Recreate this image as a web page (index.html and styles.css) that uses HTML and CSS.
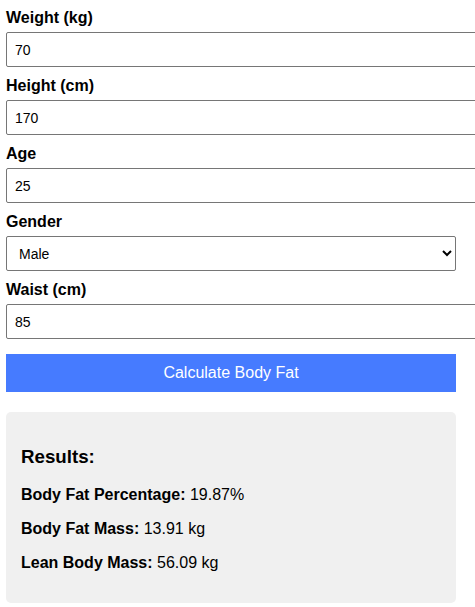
FILE: index.html
```html
<!DOCTYPE html>
<html lang="en">
<head>
    <meta charset="UTF-8">
    <meta name="viewport" content="width=device-width, initial-scale=1.0">
    <title>Body Fat Calculator</title>
    <link rel="stylesheet" href="styles.css">
</head>
<body>
    <div class="container">
        <label for="weight">Weight (kg)</label>
        <input type="number" id="weight" value="70">

        <label for="height">Height (cm)</label>
        <input type="number" id="height" value="170">

        <label for="age">Age</label>
        <input type="number" id="age" value="25">

        <label for="gender">Gender</label>
        <select id="gender">
            <option value="male">Male</option>
            <option value="female">Female</option>
        </select>

        <label for="waist">Waist (cm)</label>
        <input type="number" id="waist" value="85">

        <button id="calcBtn">Calculate Body Fat</button>

        <div class="results" id="results">
            <h3>Results:</h3>
            <p><strong>Body Fat Percentage:</strong> <span id="bfp">19.87%</span></p>
            <p><strong>Body Fat Mass:</strong> <span id="bfm">13.91 kg</span></p>
            <p><strong>Lean Body Mass:</strong> <span id="lbm">56.09 kg</span></p>
        </div>
    </div>
</body>
</html>
```

FILE: styles.css
```css
body {
    font-family: Arial, "Liberation Sans", sans-serif;
    margin: 0;
    padding: 0;
    color: #000;
    background: #fff;
    overflow: hidden;
}
.container {
    width: 450px;
    padding: 9px 6px;
}
label {
    display: block;
    font-weight: bold;
    font-size: 16px;
    margin-bottom: 5px;
}
input, select {
    display: block;
    width: 100%;
    font-size: 14px;
    font-family: Arial, "Liberation Sans", sans-serif;
    border: 1px solid #767676;
    border-radius: 2px;
    margin: 0 0 10px 0;
    background: #fff;
    color: #000;
}
input {
    box-sizing: content-box;
    height: 17px;
    padding: 8px 12px 8px 8px;
}
select {
    height: 35px;
    box-sizing: border-box;
    padding: 0 8px;
}
button {
    display: block;
    width: 100%;
    margin-top: 15px;
    background-color: #467bff;
    border: none;
    color: white;
    padding: 10px;
    font-size: 16px;
    font-family: Arial, "Liberation Sans", sans-serif;
    cursor: pointer;
}
.results {
    margin-top: 20px;
    background: #f0f0f0;
    border-radius: 5px;
    padding: 15px;
}
.results h3 {
    font-size: 18.72px;
    margin: 18.72px 0;
}
.results p {
    font-size: 16px;
    margin: 16px 0;
}
```
